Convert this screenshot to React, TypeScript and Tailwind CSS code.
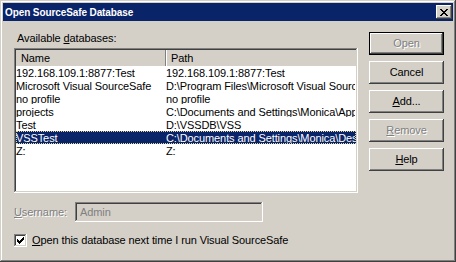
import React from 'react';

const FONT = { fontFamily: '"Liberation Sans", Arial, sans-serif' };

const raised = 'shadow-[inset_-1px_-1px_#404040,inset_1px_1px_#ffffff,inset_-2px_-2px_#808080,inset_2px_2px_#d4d0c8]';
const sunken = 'shadow-[inset_-1px_-1px_#ffffff,inset_1px_1px_#808080,inset_-2px_-2px_#d4d0c8,inset_2px_2px_#404040]';
const disabledText = 'text-[#808080] [text-shadow:1px_1px_0_#ffffff]';

const rows = [
    { name: '192.168.109.1:8877:Test', path: '192.168.109.1:8877:Test' },
    { name: 'Microsoft Visual SourceSafe', path: 'D:\\Program Files\\Microsoft Visual SourceSafe' },
    { name: 'no profile', path: 'no profile' },
    { name: 'projects', path: 'C:\\Documents and Settings\\Monica\\Application Data' },
    { name: 'Test', path: 'D:\\VSSDB\\VSS' },
    { name: 'VSSTest', path: 'C:\\Documents and Settings\\Monica\\Desktop\\VSSTest' },
    { name: 'Z:', path: 'Z:' },
];

type BtnProps = { label: React.ReactNode; disabled?: boolean; isDefault?: boolean };

const Btn: React.FC<BtnProps> = ({ label, disabled, isDefault }) => (
    <div className={`w-[75px] h-[23px] ${isDefault ? 'border border-black' : ''}`}>
        <div className={`w-full h-full flex items-center justify-center bg-[#d4d0c8] ${raised} ${disabled ? disabledText : 'text-black'}`}>
            <span>{label}</span>
        </div>
    </div>
);

const App: React.FC = () => {
    const selected = 5;

    return (
        <div style={FONT} className="w-[456px] h-[262px] bg-[#d4d0c8] text-[11px] leading-[13px] tracking-[-0.1px] text-black shadow-[inset_-1px_-1px_#404040,inset_1px_1px_#d4d0c8,inset_-2px_-2px_#808080,inset_2px_2px_#ffffff] p-[3px] flex flex-col">
            {/* title bar */}
            <div className="h-[18px] bg-[#0a246a] flex items-center justify-between pl-[2px] pr-[1px] shrink-0">
                <span className="text-white font-bold text-[10px] tracking-[-0.1px]">Open SourceSafe Database</span>
                <div className={`w-[16px] h-[14px] bg-[#d4d0c8] ${raised} flex items-center justify-center`}>
                    <svg width="8" height="7" viewBox="0 0 8 7" shapeRendering="crispEdges">
                        <path d="M0 0h2v1h-2zM6 0h2v1h-2zM1 1h2v1h-2zM5 1h2v1h-2zM2 2h4v1h-4zM3 3h2v1h-2zM2 4h4v1h-4zM1 5h2v1h-2zM5 5h2v1h-2zM0 6h2v1h-2zM6 6h2v1h-2z" fill="#000" />
                    </svg>
                </div>
            </div>

            <div className="flex pt-[11px] pl-[11px]">
                {/* left column */}
                <div className="flex flex-col w-[344px]">
                    <div className="h-[13px] mb-[3px] pl-[3px]">
                        Available <span className="underline">d</span>atabases:
                    </div>

                    <div className={`h-[145px] bg-white ${sunken} p-[2px] overflow-hidden`}>
                        <div className="flex h-[16px] bg-[#d4d0c8]">
                            <div className="w-[150px] pl-[5px] flex items-center shadow-[inset_-1px_0_#808080]">Name</div>
                            <div className="flex-1 pl-[5px] flex items-center shadow-[inset_1px_0_#ffffff]">Path</div>
                        </div>
                        {rows.map((r, i) => {
                            const sel = i === selected;
                            return (
                                <div
                                    key={r.name}
                                    className={`flex h-[13px] whitespace-nowrap ${sel ? 'bg-[#0a246a] text-white border border-dotted border-[#e8d890]' : 'border border-transparent'}`}
                                >
                                    <div className="w-[150px] overflow-hidden -ml-[1px]">{r.name}</div>
                                    <div className="flex-1 overflow-hidden">{r.path}</div>
                                </div>
                            );
                        })}
                    </div>

                    <div className="flex items-center mt-[9px] h-[20px]">
                        <span className={`w-[61px] ${disabledText}`}>
                            <span className="underline">U</span>sername:
                        </span>
                        <div className={`w-[188px] h-[20px] bg-[#d4d0c8] ${sunken} flex items-center pl-[5px] text-[#808080]`}>
                            Admin
                        </div>
                    </div>

                    <div className="flex items-center mt-[12px] h-[13px]">
                        <div className={`w-[13px] h-[13px] bg-white ${sunken} flex items-center justify-center`}>
                            <svg width="7" height="7" viewBox="0 0 7 7" shapeRendering="crispEdges">
                                <path d="M6 0h1v3h-1zM5 1h1v3h-1zM4 2h1v3h-1zM3 3h1v3h-1zM2 4h1v3h-1zM1 3h1v3h-1zM0 2h1v3h-1z" fill="#000" />
                            </svg>
                        </div>
                        <span className="ml-[5px]">
                            <span className="underline">O</span>pen this database next time I run Visual SourceSafe
                        </span>
                    </div>
                </div>

                {/* right buttons */}
                <div className="flex flex-col gap-[6px] ml-[11px]">
                    <Btn label="Open" disabled isDefault />
                    <Btn label="Cancel" />
                    <Btn label={<><span className="underline">A</span>dd...</>} />
                    <Btn label={<><span className="underline">R</span>emove</>} disabled />
                    <Btn label={<><span className="underline">H</span>elp</>} />
                </div>
            </div>
        </div>
    );
};

export default App;
